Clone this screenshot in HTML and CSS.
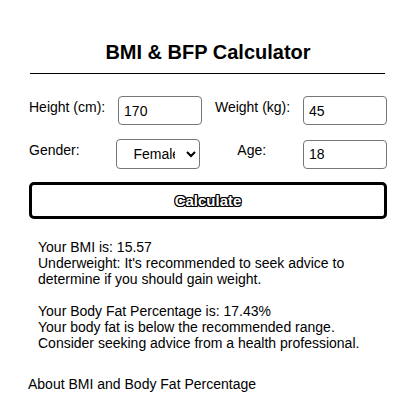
FILE: index.html
```html
<!DOCTYPE html>
<html lang="en">
<head>
<meta charset="utf-8">
<title>BMI &amp; BFP Calculator</title>
<link rel="stylesheet" href="styles.css">
</head>
<body>
<div class="app">
  <header class="app-header">
    <h1 class="title">BMI &amp; BFP Calculator</h1>
  </header>
  <hr class="rule">
  <form class="calc">
    <div class="row">
      <label class="field-label" for="height">Height (cm):</label>
      <input class="field" id="height" type="text" value="170">
      <label class="field-label" for="weight">Weight (kg):</label>
      <input class="field" id="weight" type="text" value="45">
    </div>
    <div class="row">
      <label class="field-label" for="gender">Gender:</label>
      <select class="field select" id="gender">
        <option>Female</option>
        <option>Male</option>
      </select>
      <label class="field-label" for="age">Age:</label>
      <input class="field" id="age" type="text" value="18">
    </div>
    <button class="calc-btn" type="button">Calculate</button>
  </form>
  <div class="result">
    <p class="result-p">Your BMI is: 15.57<br>Underweight: It's recommended to seek advice to determine if you should gain weight.</p>
    <p class="result-p second">Your Body Fat Percentage is: 17.43%<br>Your body fat is below the recommended range. Consider seeking advice from a health professional.</p>
  </div>
  <a class="about">About BMI and Body Fat Percentage</a>
</div>
</body>
</html>
```

FILE: styles.css
```css
html, body {
  margin: 0;
  padding: 0;
  background: #fff;
}
body {
  font-family: "Liberation Sans", Arial, sans-serif;
  font-size: 14px;
  line-height: 16px;
  color: #000;
}
.app {
  width: 358px;
  margin-left: 29px;
}
.app-header {
  padding-top: 41px;
  padding-bottom: 9px;
  text-align: center;
}
.title {
  margin: 0;
  font-size: 20px;
  line-height: 23px;
  font-weight: bold;
}
.rule {
  height: 0;
  border: 0;
  border-top: 1px solid #000;
  margin: 0 2px 0 1px;
}
.calc {
  margin-top: 22px;
}
.row {
  display: flex;
  justify-content: space-between;
  align-items: center;
}
.row + .row {
  margin-top: 14px;
}
.field-label {
  padding-bottom: 8px;
  line-height: 16px;
}
.field {
  box-sizing: border-box;
  width: 84px;
  height: 29px;
  border: 1px solid #767676;
  border-radius: 4px;
  padding: 0 5px;
  font-family: "Liberation Sans", Arial, sans-serif;
  font-size: 14px;
  color: #000;
  background: #fff;
}
.select {
  height: 30px;
  padding: 0 8px 0 12px;
}
.calc-btn {
  display: block;
  box-sizing: border-box;
  width: 358px;
  height: 37px;
  margin-top: 13px;
  border: 3px solid #000;
  border-radius: 5px;
  background: #fff;
  color: #fff;
  font-family: "Liberation Sans", Arial, sans-serif;
  font-size: 15px;
  font-weight: bold;
  text-shadow: 1px 0 0 #000, -1px 0 0 #000, 0 1px 0 #000, 0 -1px 0 #000, 1px 1px 0 #000, -1px -1px 0 #000, 1px -1px 0 #000, -1px 1px 0 #000;
  cursor: pointer;
}
.result {
  margin-top: 20px;
  padding: 0 9px;
}
.result-p {
  margin: 0;
}
.result-p.second {
  margin-top: 16px;
}
.about {
  display: block;
  margin-top: 25px;
  color: #000;
  text-decoration: none;
  margin-left: -1px;
}
```
